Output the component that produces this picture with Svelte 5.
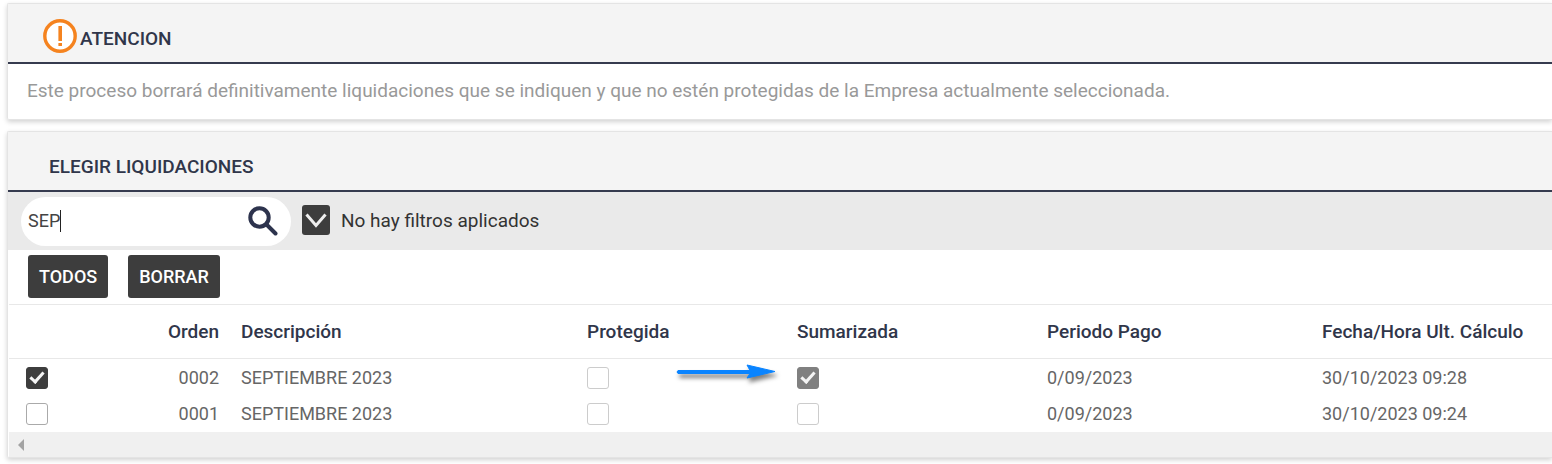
<script>
  let query = $state('SEP');
  let rows = $state([
    { selected: true, order: '0002', name: 'SEPTIEMBRE 2023', locked: false, summed: true, period: '0/09/2023', date: '30/10/2023 09:28' },
    { selected: false, order: '0001', name: 'SEPTIEMBRE 2023', locked: false, summed: false, period: '0/09/2023', date: '30/10/2023 09:24' }
  ]);

  function selectAll() {
    rows.forEach((row) => (row.selected = true));
  }
</script>

<main>
  <section class="panel">
    <header class="with-icon">
      <svg class="warning" viewBox="0 0 34 34" aria-hidden="true">
        <circle cx="17" cy="17" r="15.2" fill="#fff" stroke="#f5831f" stroke-width="3.4" />
        <path d="M15.4 7h3.6v15h-3.6zM15.4 24h3.6v3h-3.6z" fill="#f5831f" />
      </svg>
      <h2>ATENCION</h2>
    </header>
    <p>Este proceso borrará definitivamente liquidaciones que se indiquen y que no estén protegidas de la Empresa actualmente seleccionada.</p>
  </section>

  <section class="panel">
    <header><h2>ELEGIR LIQUIDACIONES</h2></header>
    <div class="filters">
      <div class="search">
        <div class="field">
          <span class="ghost" aria-hidden="true">{query}</span>
          <input type="text" aria-label="Buscar" bind:value={query} />
        </div>
        <button class="find" aria-label="Buscar liquidaciones">
          <svg viewBox="0 0 30 30" fill="none" stroke="#2d334d" aria-hidden="true">
            <circle cx="11.5" cy="11.5" r="9.2" stroke-width="4" />
            <path d="M18.5 18.5L27.5 27.5" stroke-width="4" stroke-linecap="round" />
          </svg>
        </button>
      </div>
      <button class="toggle" aria-label="Mostrar filtros">
        <svg viewBox="0 0 28 30" fill="none" stroke="#eee" stroke-width="3" aria-hidden="true">
          <path d="M4.5 9.5L14 20.5L23.5 9.5" />
        </svg>
      </button>
      <span class="status">No hay filtros aplicados</span>
    </div>

    <div class="actions">
      <button onclick={selectAll}>TODOS</button>
      <button>BORRAR</button>
    </div>

    <div class="grid">
      <table>
        <colgroup>
          <col class="c-check" /><col class="c-order" /><col class="c-name" /><col class="c-locked" />
          <col class="c-summed" /><col class="c-period" /><col />
        </colgroup>
        <thead>
          <tr>
            <th></th>
            <th class="right">Orden</th>
            <th>Descripción</th>
            <th>Protegida</th>
            <th>Sumarizada</th>
            <th>Periodo Pago</th>
            <th>Fecha/Hora Ult. Cálculo</th>
          </tr>
        </thead>
        <tbody>
          {#each rows as row, i}
            <tr>
              <td class="pick"><input type="checkbox" aria-label="Seleccionar {row.order}" bind:checked={row.selected} /></td>
              <td class="right">{row.order}</td>
              <td>{row.name}</td>
              <td><input type="checkbox" aria-label="Protegida {row.order}" disabled checked={row.locked} /></td>
              <td class="summed">
                <input type="checkbox" aria-label="Sumarizada {row.order}" disabled checked={row.summed} />
                {#if i === 0}
                  <svg class="arrow" viewBox="0 0 104 24" aria-hidden="true">
                    <path d="M4 8.5H76L73 3L101 9.5L73 16L76 11.5H4Q2 10 4 8.5Z" fill="#0a84ff" stroke="#0a84ff" stroke-width="1" />
                  </svg>
                {/if}
              </td>
              <td>{row.period}</td>
              <td>{row.date}</td>
            </tr>
          {/each}
        </tbody>
      </table>
      <div class="scrollbar">
        <svg viewBox="0 0 6 12" aria-hidden="true"><path d="M6 0V12L0 6Z" fill="#a3a3a3" /></svg>
      </div>
    </div>
  </section>
</main>

<style>
  :global(body) {
    margin: 0;
    background: #fff;
    overflow-x: hidden;
  }

  main {
    display: flex;
    flex-direction: column;
    gap: 11px;
    padding: 3px 0 6px 7px;
    font: 18px/24px Roboto, sans-serif;
    color: #666;
    overflow: hidden;
  }

  .panel {
    border: 1px solid #e4e4e4;
    border-right: 0;
    border-radius: 2px 0 0 2px;
    box-shadow: 0 2px 5px rgba(0, 0, 0, 0.18);
  }

  header {
    display: flex;
    align-items: center;
    box-sizing: border-box;
    height: 60px;
    padding: 12px 41px 0;
    background: #f4f4f4;
    border-bottom: 2px solid #363b4f;
  }

  .with-icon {
    gap: 3px;
    padding-left: 35px;
  }

  .warning {
    width: 34px;
    height: 34px;
    margin-bottom: 6px;
  }

  h2 {
    margin: 0;
    font-size: 19px;
    font-weight: 500;
    color: #30364a;
  }

  p {
    margin: 0;
    padding: 15px 19px 16px;
    font-size: 19px;
    color: #999;
  }

  button {
    font: inherit;
    border: 0;
    padding: 0;
    border-radius: 3px;
    background: #3d3d3d;
    color: #fff;
    cursor: pointer;
  }

  .filters {
    display: flex;
    align-items: center;
    box-sizing: border-box;
    height: 58px;
    padding: 0 13px;
    background: #eaeaea;
    color: #333;
  }

  .status {
    font-size: 19px;
  }

  .search {
    display: flex;
    align-items: center;
    box-sizing: border-box;
    width: 270px;
    height: 49px;
    padding: 0 13px 0 7px;
    border-radius: 25px;
    background: #fff;
  }

  .field {
    position: relative;
    flex: 1;
    min-width: 0;
  }

  .field input {
    box-sizing: border-box;
    width: 100%;
    height: 24px;
    padding: 0;
    border: 0;
    outline: 0;
    background: transparent;
    font: inherit;
    color: #444;
    caret-color: transparent;
    display: block;
  }

  .ghost {
    position: absolute;
    left: 0;
    top: 1px;
    height: 22px;
    color: transparent;
    border-right: 1px solid #222;
    pointer-events: none;
  }

  .find {
    width: 30px;
    height: 30px;
    background: none;
  }

  .toggle {
    width: 28px;
    height: 30px;
    margin: 0 11px 3px;
  }

  button svg {
    display: block;
    width: 100%;
    height: 100%;
  }

  .actions {
    display: flex;
    gap: 20px;
    padding: 5px 20px 6px;
  }

  .actions button {
    height: 43px;
    padding: 0 11px;
    font-weight: 500;
  }

  .grid {
    margin-left: 1px;
  }

  table {
    width: 100%;
    table-layout: fixed;
    border-collapse: separate;
    border-spacing: 0;
    margin-bottom: 1px;
  }

  .c-check { width: 60px; }
  .c-order { width: 161px; }
  .c-name { width: 346px; }
  .c-locked { width: 210px; }
  .c-summed { width: 250px; }
  .c-period { width: 275px; }

  th,
  td {
    box-sizing: border-box;
    padding: 0 11px;
    text-align: left;
    white-space: nowrap;
  }

  th {
    height: 55px;
    border-top: 1px solid #e8e8e8;
    border-bottom: 1px solid #e8e8e8;
    font-size: 19px;
    font-weight: 500;
    color: #30364a;
  }

  td {
    height: 36px;
    padding-top: 1px;
  }

  .right {
    text-align: right;
  }

  .pick {
    padding-left: 17px;
  }

  input[type='checkbox'] {
    appearance: none;
    display: block;
    box-sizing: border-box;
    width: 22px;
    height: 22px;
    margin: 0;
    border: 1px solid #aaa;
    border-radius: 3px;
    background: #fff;
  }

  input[type='checkbox']:disabled {
    border-color: #ccc;
  }

  input[type='checkbox']:checked {
    border-color: #3d3d3d;
    background: #3d3d3d;
  }

  input[type='checkbox']:checked:disabled {
    border-color: #808080;
    background: #808080;
  }

  input[type='checkbox']:checked::after {
    content: '';
    display: block;
    box-sizing: border-box;
    width: 8px;
    height: 14px;
    margin: 1px 0 0 6px;
    border: solid #f4f4f4;
    border-width: 0 3px 3px 0;
    transform: rotate(42deg);
  }

  .summed {
    position: relative;
  }

  .arrow {
    position: absolute;
    left: -112px;
    top: 3px;
    width: 104px;
    height: 24px;
    overflow: visible;
    filter: drop-shadow(2px 4px 2px rgba(0, 0, 0, 0.5));
  }

  .scrollbar {
    display: flex;
    align-items: center;
    height: 25px;
    padding: 0 9px;
    background: #f0f0f0;
  }

  .scrollbar svg {
    width: 6px;
    height: 12px;
  }
</style>
